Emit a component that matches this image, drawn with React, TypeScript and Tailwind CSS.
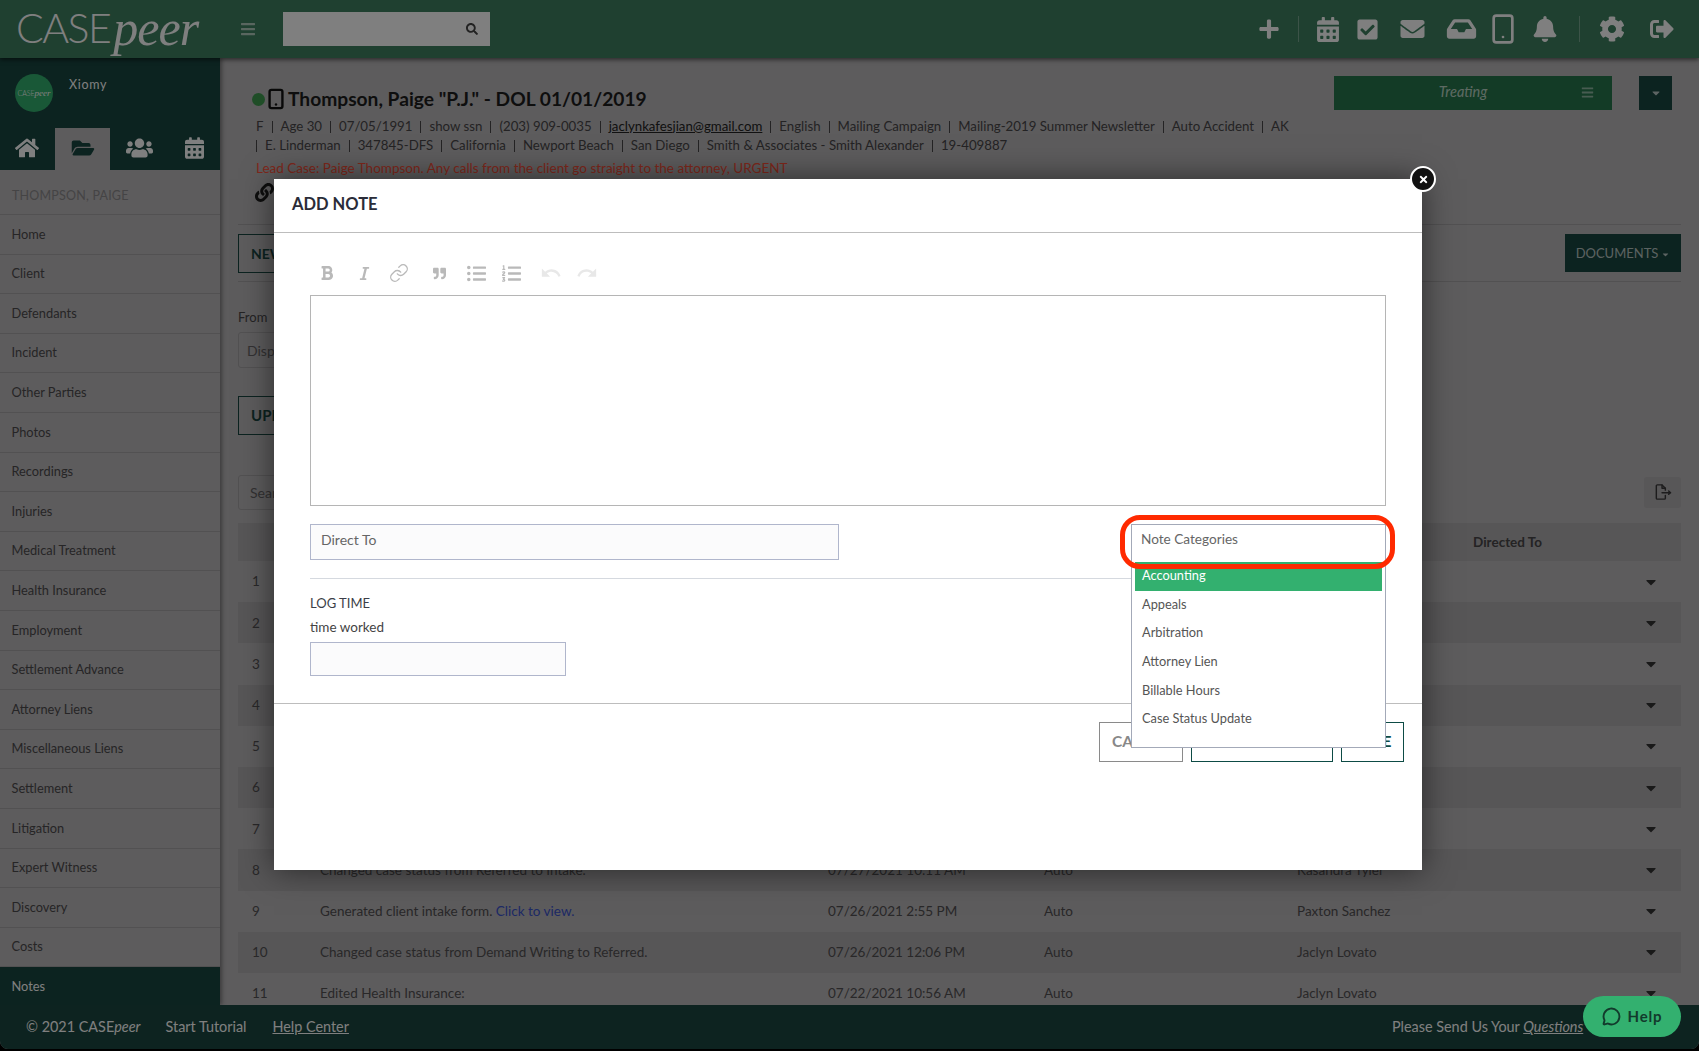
import { Link, Smartphone, MessageCircle } from "lucide-react";
import {
  FaBars,
  FaBell,
  FaBold,
  FaCalendarAlt,
  FaCaretDown,
  FaCheckSquare,
  FaCog,
  FaEnvelope,
  FaFolderOpen,
  FaHome,
  FaInbox,
  FaItalic,
  FaLink,
  FaListOl,
  FaListUl,
  FaPlus,
  FaQuoteRight,
  FaSearch,
  FaSignOutAlt,
  FaTimes,
  FaUsers,
} from "react-icons/fa";
import { MdRedo, MdUndo } from "react-icons/md";

const navItems = [
  "Home",
  "Client",
  "Defendants",
  "Incident",
  "Other Parties",
  "Photos",
  "Recordings",
  "Injuries",
  "Medical Treatment",
  "Health Insurance",
  "Employment",
  "Settlement Advance",
  "Attorney Liens",
  "Miscellaneous Liens",
  "Settlement",
  "Litigation",
  "Expert Witness",
  "Discovery",
  "Costs",
];

const metaOne = [
  "F",
  "Age 30",
  "07/05/1991",
  "show ssn",
  "(203) 909-0035",
  "jaclynkafesjian@gmail.com",
  "English",
  "Mailing Campaign",
  "Mailing-2019 Summer Newsletter",
  "Auto Accident",
  "AK",
];

const metaTwo = [
  "",
  "E. Linderman",
  "347845-DFS",
  "California",
  "Newport Beach",
  "San Diego",
  "Smith & Associates - Smith Alexander",
  "19-409887",
];

const rows = [
  { n: 1, text: "", date: "", type: "", user: "" },
  { n: 2, text: "", date: "", type: "", user: "" },
  { n: 3, text: "", date: "", type: "", user: "" },
  { n: 4, text: "", date: "", type: "", user: "" },
  { n: 5, text: "", date: "", type: "", user: "" },
  { n: 6, text: "", date: "", type: "", user: "" },
  { n: 7, text: "", date: "", type: "", user: "" },
  { n: 8, text: "Changed case status from Referred to Intake.", date: "07/27/2021 10:11 AM", type: "Auto", user: "Kasandra Tyler" },
  { n: 9, text: "Generated client intake form.", link: "Click to view.", date: "07/26/2021 2:55 PM", type: "Auto", user: "Paxton Sanchez" },
  { n: 10, text: "Changed case status from Demand Writing to Referred.", date: "07/26/2021 12:06 PM", type: "Auto", user: "Jaclyn Lovato" },
  { n: 11, text: "Edited Health Insurance:", date: "07/22/2021 10:56 AM", type: "Auto", user: "Jaclyn Lovato" },
];

const categories = ["Accounting", "Appeals", "Arbitration", "Attorney Lien", "Billable Hours", "Case Status Update"];

function TopBar() {
  return (
    <header className="h-[58px] shrink-0 flex items-center bg-[#3e8060] shadow-[0_2px_4px_rgba(0,0,0,0.5)] relative z-10 text-white">
      <div className="w-[220px] h-full pl-[16px] flex items-start">
        <span className="text-[41px] font-light tracking-[-1.5px] leading-[56px]">CASE</span>
        <span className="font-['Liberation_Serif'] italic text-[50px] ml-[3px] pr-[6px] tracking-[-1px] leading-[56px]">peer</span>
      </div>
      <FaBars className="w-[18px] h-[16px] ml-[19px] opacity-60" />
      <div className="ml-[26px] w-[207px] h-[34px] bg-white flex items-center justify-end pr-[12px]">
        <FaSearch className="w-[12px] h-[12px] text-[#444]" />
      </div>
      <div className="ml-auto flex items-center h-full">
        <FaPlus className="w-[22px] h-[22px] mr-[18px]" />
        <div className="w-px h-[26px] bg-white/30 mr-[18px]" />
        <FaCalendarAlt className="w-[22px] h-[25px] mr-[17px]" />
        <FaCheckSquare className="w-[23px] h-[23px] mr-[20px]" />
        <FaEnvelope className="w-[27px] h-[24px] mr-[19px]" />
        <FaInbox className="w-[33px] h-[26px] mr-[9px]" />
        <Smartphone className="w-[32px] h-[32px] mr-[14px]" strokeWidth={2} />
        <FaBell className="w-[24px] h-[26px] mr-[22px]" />
        <div className="w-px h-[26px] bg-white/30 mr-[19px]" />
        <FaCog className="w-[26px] h-[26px] mr-[23px]" />
        <FaSignOutAlt className="w-[28px] h-[24px] mr-[23px]" />
      </div>
    </header>
  );
}

function Sidebar() {
  return (
    <aside className="w-[220px] shrink-0 flex flex-col bg-[#bab8ba] shadow-[2px_0_4px_rgba(0,0,0,0.35)] relative z-[1]">
      <div className="h-[112px] bg-[#184640] relative shrink-0 text-white">
        <div className="flex pt-[16px] pl-[15px]">
          <div className="w-[38px] h-[38px] rounded-full bg-[#33b06f] flex items-center justify-center text-[7px] leading-none">
            <span className="font-light">CASE</span>
            <span className="font-['Liberation_Serif'] italic text-[9px]">peer</span>
          </div>
          <span className="ml-[16px] mt-[1px] text-[12.5px] tracking-[0.7px] leading-[20px]">Xiomy</span>
        </div>
        <div className="flex mt-[16px] h-[42px]">
          <div className="w-[55px] flex items-center justify-center pr-[2px] pb-[3px]"><FaHome className="w-[24px] h-[22px]" /></div>
          <div className="w-[55px] flex items-center justify-center bg-[#bab8ba] pb-[3px]"><FaFolderOpen className="w-[24px] h-[20px] text-[#184640]" /></div>
          <div className="w-[58px] flex items-center justify-center pb-[3px]"><FaUsers className="w-[27px] h-[22px]" /></div>
          <div className="w-[52px] flex items-center justify-center pb-[3px]"><FaCalendarAlt className="w-[19px] h-[22px]" /></div>
        </div>
      </div>
      <div className="h-[45px] shrink-0 flex items-center pl-[12px] pt-[8px] text-[12.5px] text-[#8a888a] border-b border-[#a4a2a4] tracking-[0.2px]">
        THOMPSON, PAIGE
      </div>
      {navItems.map((item) => (
        <div key={item} className="h-[39.6px] shrink-0 flex items-center pl-[11.5px] text-[12.8px] text-[#4c4a4c] border-b border-[#a4a2a4]">
          {item}
        </div>
      ))}
      <div className="flex-1 flex items-center pl-[11.5px] text-[12.8px] text-white bg-[#184640]">Notes</div>
    </aside>
  );
}

function Meta({ items, pull }: { items: string[]; pull?: boolean }) {
  return (
    <div className={`flex items-center h-[19px] text-[13.25px] text-[#484648] whitespace-nowrap ${pull ? "-ml-[8px]" : ""}`}>
      {items.map((item, i) => (
        <span key={i} className="flex items-center">
          {i > 0 && <span className="w-px h-[12px] bg-[#484648] mx-[8px]" />}
          <span className={item.includes("@") ? "underline text-[#222]" : ""}>{item}</span>
        </span>
      ))}
    </div>
  );
}

function MainContent() {
  return (
    <main className="flex-1 min-w-0 relative overflow-hidden px-[18px] pt-[18px]">
      {/* Case header */}
      <div className="flex items-start h-[40px]">
        <div className="flex items-center pl-[14px] pt-[12px]">
          <span className="w-[13px] h-[13px] rounded-full bg-[#3f9a4f]" />
          <Smartphone className="w-[22px] h-[22px] text-[#111]" strokeWidth={2.6} />
          <h1 className="ml-[1px] text-[19.2px] font-bold text-[#1c1c1c] leading-[22px]">Thompson, Paige "P.J." - DOL 01/01/2019</h1>
        </div>
        <div className="ml-auto mr-[9px] w-[278px] h-[34px] bg-[#26774c] flex items-center justify-center pr-[20px] pb-[2px] relative text-[14.5px] italic text-white/70">
          Treating
          <FaBars className="absolute right-[18px] top-[10px] w-[13px] h-[13px] opacity-70" />
        </div>
        <div className="w-[33px] h-[34px] ml-[18px] mr-[9px] bg-[#184640] flex items-center justify-center text-white/70">
          <FaCaretDown className="w-[12px] h-[12px]" />
        </div>
      </div>
      <div className="pl-[18px] mt-[1px]">
        <Meta items={metaOne} />
        <Meta items={metaTwo} pull />
        <div className="mt-[3px] text-[13.5px] text-[#ff5038] h-[19px]">
          Lead Case: Paige Thompson. Any calls from the client go straight to the attorney, URGENT
        </div>
      </div>
      <div className="pl-[17px] mt-[6px] h-[22px]">
        <FaLink className="w-[19px] h-[19px] text-[#1c1c1c]" />
      </div>

      {/* Toolbar */}
      <div className="mt-[19px] border-y border-[#a4a2a4] h-[58px] flex items-center justify-between">
        <div className="h-[39px] w-[70px] border border-[#184640] flex items-center pl-[12px] text-[14px] font-bold text-[#184640]">NEW</div>
        <div className="h-[38px] w-[116px] bg-[#184640] text-white/70 flex items-center justify-center pt-[2px] text-[13px]">
          DOCUMENTS
          <FaCaretDown className="w-[9px] h-[9px] ml-[3px]" />
        </div>
      </div>
      <div className="mt-[26px] text-[13px] text-[#484648] leading-[18px]">From</div>
      <div className="mt-[6px] w-[200px] h-[36px] border border-[#a4a2a4] rounded-[3px] flex items-center pl-[8px] text-[14px] text-[#656365]">Disp</div>
      <div className="mt-[28px] h-[39px] w-[100px] border border-[#184640] flex items-center pl-[12px] text-[15px] font-bold text-[#184640]">UPD</div>

      {/* Search row */}
      <div className="mt-[39px] h-[36px] flex items-center justify-between">
        <div className="w-[200px] h-[35px] border border-[#a4a2a4] rounded-[3px] flex items-center pl-[11px] text-[14px] text-[#656365]">Sear</div>
        <div className="w-[37px] h-[31px] bg-[#b0aeb0] rounded-[3px] flex items-center justify-center text-[#3a393a]">
          <svg viewBox="0 0 20 20" className="w-[19px] h-[19px]" fill="none" stroke="currentColor" strokeWidth="1.5" strokeLinecap="round" strokeLinejoin="round">
            <path d="M13 7.5V5.5L9.5 2H4.5a1 1 0 0 0-1 1v13a1 1 0 0 0 1 1h7.5a1 1 0 0 0 1-1v-3" />
            <path d="M9.5 2v3.5H13" />
            <path d="M9.5 10.2h9M16.5 8.5l2 1.7-2 1.7" />
          </svg>
        </div>
      </div>

      {/* Table */}
      <div className="mt-[13px] text-[13.5px] text-[#525052]">
        <div className="h-[38px] bg-[#aeacae] flex items-center font-bold text-[13.5px] text-[#484648]">
          <span className="ml-[1235px]">Directed To</span>
        </div>
        {rows.map((row) => (
          <div key={row.n} className={`h-[41.2px] flex items-center whitespace-nowrap ${row.n % 2 === 0 ? "bg-[#aeacae]" : ""}`}>
            <span className="w-[82px] pl-[14px]">{row.n}</span>
            <span className="w-[508px]">
              {row.text} {row.link && <span className="text-[#3c54cc]">{row.link}</span>}
            </span>
            <span className="w-[216px]">{row.date}</span>
            <span className="w-[253px]">{row.type}</span>
            <span className="w-[346px]">{row.user}</span>
            <FaCaretDown className="w-[16px] h-[16px] text-[#333]" />
          </div>
        ))}
      </div>
    </main>
  );
}

function NoteModal() {
  return (
    <div className="absolute left-[274px] top-[179px] w-[1148px] h-[691px] bg-white shadow-[0_0_30px_rgba(0,0,0,0.55)]">
      <button className="absolute -right-[14px] -top-[13px] w-[26px] h-[26px] rounded-full bg-[#111] border-2 border-white flex items-center justify-center text-white z-10">
        <FaTimes className="w-[11px] h-[11px]" />
      </button>
      <h2 className="h-[54px] flex items-center pl-[18px] pb-[2px] text-[16.5px] font-bold text-[#2a2c38] border-b border-[#bdbdbd]">ADD NOTE</h2>

      <div className="px-[36px]">
        {/* Editor toolbar */}
        <div className="h-[62px] flex items-center pt-[18px]">
          <FaBold className="w-[16px] h-[16px] text-[#b9b9b9] ml-[9px]" />
          <FaItalic className="w-[15px] h-[15px] text-[#b9b9b9] ml-[21.5px]" />
          <Link className="w-[20px] h-[20px] text-[#b9b9b9] ml-[17.5px]" strokeWidth={1.6} />
          <FaQuoteRight className="w-[13px] h-[13px] text-[#b9b9b9] ml-[23.5px]" />
          <FaListUl className="w-[19px] h-[19px] text-[#b9b9b9] ml-[21px]" />
          <FaListOl className="w-[19px] h-[19px] text-[#b9b9b9] ml-[16px]" />
          <MdUndo className="w-[22px] h-[22px] text-[#e8e8e8] ml-[19.5px]" />
          <MdRedo className="w-[22px] h-[22px] text-[#e8e8e8] ml-[14px]" />
        </div>
        <div className="h-[211px] border border-[#b5b5b5]" />

        {/* Direct to */}
        <div className="mt-[18px] w-[529px] h-[36px] border border-[#b0b6cc] bg-[#fbfbfc] pl-[10px] pt-[5px] text-[14px] text-[#666] leading-[19px]">Direct To</div>
        <div className="mt-[18px] border-t border-[#d5d9df]" />
        <div className="mt-[15px] text-[13px] leading-[18px] text-[#3c3e48]">LOG TIME</div>
        <div className="mt-[6px] text-[13.5px] leading-[18px] text-[#444]">time worked</div>
        <div className="mt-[6px] w-[256px] h-[34px] border border-[#b0b6cc] bg-[#fbfbfc]" />
      </div>

      {/* Footer */}
      <div className="mt-[27px] border-t border-[#bdbdbd] pr-[18px] pt-[18px] flex justify-end gap-[8px] text-[15.5px] font-bold">
        <div className="w-[84px] h-[40px] border border-[#8a8a8a] text-[#888] flex items-center pl-[12px]">CANCEL</div>
        <div className="w-[142px] h-[40px] border border-[#0d4b45]" />
        <div className="w-[63px] h-[40px] border border-[#0d4b45] text-[#0d4b45] flex items-center justify-center">SAVE</div>
      </div>

      {/* Note categories */}
      <div className="absolute left-[857px] top-[345px] w-[255px] h-[224px] border border-[#a3a9b8] bg-white">
        <div className="h-[36px] pl-[9px] pt-[5px] text-[13.6px] leading-[19px] text-[#666]">Note Categories</div>
        <div className="mt-[1px] px-[3px] text-[12.8px] text-[#555]">
          {categories.map((c, i) => (
            <div key={c} className={`h-[28.7px] pl-[7px] ${i === 0 ? "bg-[#33b06f] text-white pt-[4px]" : "pt-[4px]"}`}>{c}</div>
          ))}
        </div>
      </div>
      {/* Red annotation */}
      <div className="absolute left-[846px] top-[336px] w-[275px] h-[54px] rounded-[20px] border-[5px] border-[#ff2a00]" />
    </div>
  );
}

export default function App() {
  return (
    <div className="relative w-[1699px] h-[1051px] overflow-hidden bg-black font-['Lato','Liberation_Sans',sans-serif]">
      <div className="relative isolate h-[1049px] flex flex-col bg-[#bab8ba] rounded-b-[8px] overflow-hidden">
        <TopBar />
        <div className="flex-1 min-h-0 flex">
          <Sidebar />
          <MainContent />
        </div>
        <footer className="h-[44px] shrink-0 bg-[#1a4640] relative z-[2] flex items-center text-[14.4px] text-white">
          <span className="ml-[26px]">© 2021 CASE<em>peer</em></span>
          <span className="ml-[25px]">Start Tutorial</span>
          <span className="ml-[26px] underline">Help Center</span>
          <span className="ml-auto mr-[3px] whitespace-nowrap w-[304px]">
            Please Send Us Your <em className="underline">Questions</em>
          </span>
        </footer>
      </div>
      <div className="absolute inset-0 bg-black/50" />
      <NoteModal />
      <button className="absolute left-[1583px] top-[996px] w-[98px] h-[41px] rounded-[21px] bg-[#33b06f] flex items-center justify-center gap-[7px] text-[15px] font-bold tracking-[0.8px] text-[#123a2c]">
        <MessageCircle className="w-[19px] h-[19px]" strokeWidth={2.4} />
        Help
      </button>
    </div>
  );
}
